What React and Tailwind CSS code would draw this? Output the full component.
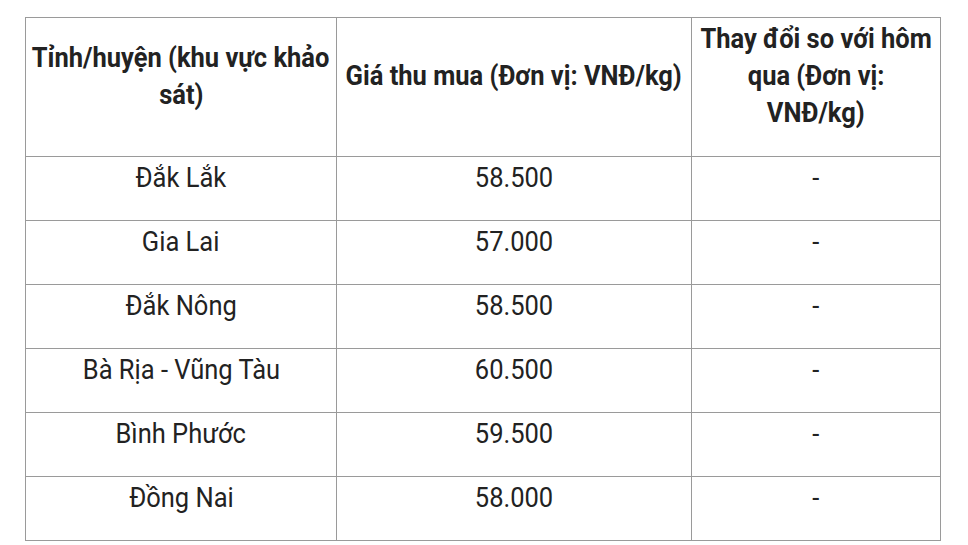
import React from "react";

// Giá thu mua theo tỉnh — bảng đơn giản
const ROWS = [
  { place: "Đắk Lắk", price: "58.500", change: "-" },
  { place: "Gia Lai", price: "57.000", change: "-" },
  { place: "Đắk Nông", price: "58.500", change: "-" },
  { place: "Bà Rịa - Vũng Tàu", price: "60.500", change: "-" },
  { place: "Bình Phước", price: "59.500", change: "-" },
  { place: "Đồng Nai", price: "58.000", change: "-" },
];

// one visual line of text, narrowed a little to match the source
function Line({ children }) {
  return (
    <div className="flex justify-center">
      <span className="inline-block whitespace-nowrap scale-x-[0.91]">{children}</span>
    </div>
  );
}

function HeadCell({ lines }) {
  return (
    <th className="border border-[#9a9a9a] pt-[2px] pb-[25px] px-2 align-middle font-bold">
      {lines.map((l) => (
        <Line key={l}>{l}</Line>
      ))}
    </th>
  );
}

function Cell({ children }) {
  return (
    <td className="border border-[#9a9a9a] pt-[2px] pb-[24px] px-2 h-[64px] align-middle">
      <Line>{children}</Line>
    </td>
  );
}

export default function App() {
  return (
    <div
      className="min-h-screen bg-white pl-[25px] pt-[17px] text-[#222222]"
      style={{ fontFamily: "Roboto, 'Noto Sans', sans-serif" }}
    >
      <table className="border-collapse w-[915px] table-fixed text-[28px] leading-[37px]">
        <colgroup>
          <col className="w-[311px]" />
          <col className="w-[355px]" />
          <col className="w-[249px]" />
        </colgroup>
        <thead>
          <tr>
            <HeadCell lines={["Tỉnh/huyện (khu vực khảo", "sát)"]} />
            <HeadCell lines={["Giá thu mua (Đơn vị: VNĐ/kg)"]} />
            <HeadCell lines={["Thay đổi so với hôm", "qua (Đơn vị:", "VNĐ/kg)"]} />
          </tr>
        </thead>
        <tbody>
          {ROWS.map((r) => (
            <tr key={r.place}>
              <Cell>{r.place}</Cell>
              <Cell>{r.price}</Cell>
              <Cell>{r.change}</Cell>
            </tr>
          ))}
        </tbody>
      </table>
    </div>
  );
}
